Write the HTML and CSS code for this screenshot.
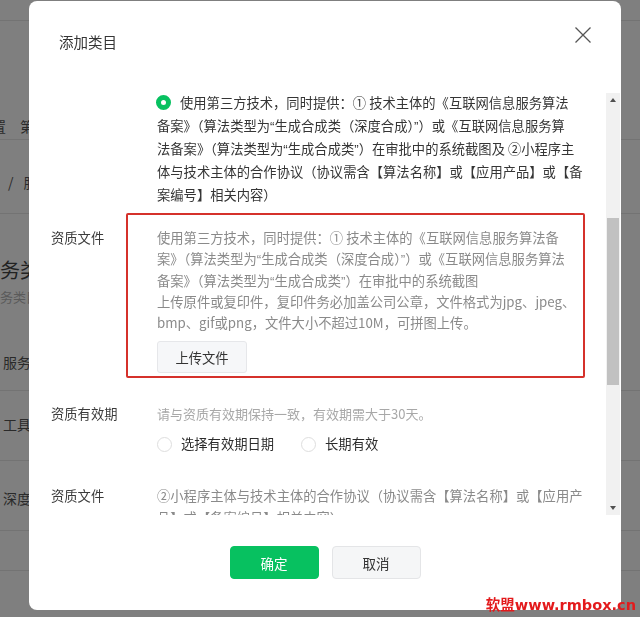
FILE: index.html
```html
<!DOCTYPE html>
<html lang="zh-CN">
<head>
    <meta charset="UTF-8">
    <title>添加类目</title>
    <link rel="stylesheet" href="styles.css">
</head>
<body>
    <div class="page">
        <div class="topbar"></div>
        <div class="tabs">
            <span class="tab tab-first">设置</span><span class="tab">第三方服务</span>
        </div>
        <div class="crumb"><span class="sep">/</span>服务类目</div>
        <div class="page-title">服务类目</div>
        <div class="page-desc">服务类目管理</div>
        <div class="row row-a">服务市场</div>
        <div class="row row-b">工具</div>
        <div class="row row-c">深度合成</div>
        <div class="row row-d"></div>
    </div>

    <div class="mask"></div>

    <div class="dialog">
        <div class="dialog-hd">
            <h3 class="dialog-title">添加类目</h3>
            <svg class="close" width="16" height="16" viewBox="0 0 16 16">
                <path d="M0.5 0.5 L15.5 15.5 M15.5 0.5 L0.5 15.5" stroke="#555" stroke-width="1.3" fill="none"/>
            </svg>
        </div>

        <div class="dialog-bd">
            <div class="scroll-content">
                <div class="form-row first-row">
                    <div class="form-label"></div>
                    <div class="form-field option-text">
                        <span class="radio radio-checked"></span>使用第三方技术，同时提供：① 技术主体的《互联网信息服务算法<br>
                        备案》（算法类型为<span class="q">“</span>生成合成类（深度合成）<span class="q">”</span>）或《互联网信息服务算<br>
                        法备案》（算法类型为<span class="q">“</span>生成合成类<span class="q">”</span>）在审批中的系统截图及 ②小程序主<br>
                        体与技术主体的合作协议（协议需含【算法名称】或【应用产品】或【备<br>
                        案编号】相关内容）
                    </div>
                </div>

                <div class="form-row">
                    <div class="form-label">资质文件</div>
                    <div class="form-field marked">
                        <div class="tips">
                            使用第三方技术，同时提供：① 技术主体的《互联网信息服务算法备<br>
                            案》（算法类型为<span class="q">“</span>生成合成类（深度合成）<span class="q">”</span>）或《互联网信息服务算法<br>
                            备案》（算法类型为<span class="q">“</span>生成合成类<span class="q">”</span>）在审批中的系统截图<br>
                            上传原件或复印件，复印件务必加盖公司公章，文件格式为jpg、jpeg、<br>
                            bmp、gif或png，文件大小不超过10M，可拼图上传。
                        </div>
                        <button class="btn-upload">上传文件</button>
                    </div>
                </div>

                <div class="form-row">
                    <div class="form-label">资质有效期</div>
                    <div class="form-field">
                        <div class="hint">请与资质有效期保持一致，有效期需大于30天。</div>
                        <div class="radio-group">
                            <label class="radio-item"><span class="radio"></span>选择有效期日期</label>
                            <label class="radio-item"><span class="radio"></span>长期有效</label>
                        </div>
                    </div>
                </div>

                <div class="form-row">
                    <div class="form-label">资质文件</div>
                    <div class="form-field">
                        <div class="tips">
                            ②小程序主体与技术主体的合作协议（协议需含【算法名称】或【应用产<br>
                            品】或【备案编号】相关内容）
                        </div>
                    </div>
                </div>
            </div>

            <div class="scrollbar">
                <span class="sb-btn"><i class="arrow-up"></i></span>
                <span class="sb-track"><span class="sb-thumb"></span></span>
                <span class="sb-btn"><i class="arrow-down"></i></span>
            </div>
        </div>

        <div class="dialog-ft">
            <button class="btn btn-primary">确定</button>
            <button class="btn btn-default">取消</button>
        </div>
    </div>

    <div class="watermark">软盟www.rmbox.cn</div>
</body>
</html>
```

FILE: styles.css
```css
html,
body {
    margin: 0;
    padding: 0;
    height: 100%;
    overflow: hidden;
}

body {
    font-family: "Noto Sans CJK SC", "Microsoft YaHei", sans-serif;
    background: #fff;
    color: #333;
}

/* page behind the mask */
.page {
    width: 640px;
    white-space: nowrap;
    overflow: hidden;
}

.topbar {
    height: 20px;
    border-bottom: 1px solid #e6e6e6;
}

.tabs {
    height: 119px;
    box-sizing: border-box;
    padding-top: 95px;
    line-height: 20px;
    font-size: 14px;
    color: #555;
    border-bottom: 1px solid #e6e6e6;
}

.tab {
    margin-right: 14px;
}

.tab-first {
    margin-left: -22px;
}

.crumb {
    height: 74px;
    box-sizing: border-box;
    padding: 32px 0 0 8px;
    line-height: 20px;
    font-size: 14px;
    color: #555;
    border-bottom: 1px solid #e6e6e6;
}

.crumb .sep {
    margin-right: 10px;
}

.page-title {
    margin-top: 42px;
    line-height: 28px;
    font-size: 20px;
    color: #444;
    text-indent: -20px;
}

.page-desc {
    margin-top: 3px;
    line-height: 20px;
    font-size: 13px;
    color: #b5b5b5;
    text-indent: -13px;
    height: 30px;
}

.row {
    box-sizing: border-box;
    padding-left: 3px;
    font-size: 14px;
    color: #555;
    border-bottom: 1px solid #e6e6e6;
}

.row-a {
    height: 74px;
    line-height: 90px;
}

.row-b {
    height: 70px;
    line-height: 66px;
}

.row-c {
    height: 70px;
    line-height: 74px;
}

.row-d {
    height: 40px;
}

.mask {
    position: fixed;
    top: 0;
    left: 0;
    right: 0;
    bottom: 0;
    background: rgba(0, 0, 0, 0.5);
}

/* dialog */
.dialog {
    position: absolute;
    top: 1px;
    left: 29px;
    width: 592px;
    height: 609px;
    background: #fff;
    border-radius: 8px;
    display: flex;
    flex-direction: column;
    overflow: hidden;
}

.dialog-hd {
    height: 90px;
    box-sizing: border-box;
    padding: 31px 30px 0 30px;
    display: flex;
    justify-content: space-between;
    align-items: flex-start;
}

.dialog-title {
    margin: 0;
    font-size: 14.5px;
    font-weight: normal;
    line-height: 20px;
    color: #353535;
}

.close {
    margin-top: -5px;
}

.dialog-bd {
    height: 424px;
    display: flex;
}

.scroll-content {
    flex: 1;
    overflow: hidden;
    padding-left: 22px;
    font-size: 13.3px;
    white-space: nowrap;
}

/* narrow quotes, kept out of the line height */
.q {
    font-family: "Liberation Sans", sans-serif;
    line-height: 0;
}

.form-row {
    display: flex;
    margin-top: 30px;
}

.form-row.first-row {
    margin-top: 0;
}

.form-row.first-row + .form-row {
    margin-top: 21px;
}

.form-label {
    width: 106px;
    flex-shrink: 0;
    line-height: 21.3px;
    color: #3b3b3b;
}

.form-field {
    flex: 1;
}

.option-text {
    line-height: 23px;
    color: #353535;
}

.tips {
    line-height: 21.3px;
    color: #8a8a8a;
}

.hint {
    line-height: 21px;
    font-size: 13px;
    color: #a8a8a8;
}

/* red annotation frame */
.marked {
    position: relative;
}

.marked::after {
    content: "";
    position: absolute;
    top: -14px;
    left: -31px;
    right: 21px;
    bottom: -5px;
    border: 2px solid #d5312b;
    border-radius: 2px;
}

.btn-upload {
    display: block;
    margin-top: 8px;
    width: 90px;
    height: 32px;
    padding: 0;
    font-family: inherit;
    font-size: 13.3px;
    color: #333;
    background: #f6f7f9;
    border: 1px solid #e6e7ea;
    border-radius: 3px;
}

.radio {
    display: inline-block;
    box-sizing: border-box;
    width: 15px;
    height: 15px;
    border: 1px solid #dedede;
    border-radius: 50%;
    background: #fff;
    margin-right: 9px;
    vertical-align: -2px;
}

.radio-checked {
    border: 5px solid #07c160;
    margin-left: -1px;
}

.radio-group {
    margin-top: 9px;
    display: flex;
    line-height: 22px;
    color: #2b2b2b;
}

.radio-item {
    display: flex;
    align-items: center;
    margin-right: 27px;
}

/* scrollbar */
.scrollbar {
    width: 14px;
    margin: 2px 1px 0 0;
    height: 422px;
    background: #f1f1f1;
    display: flex;
    flex-direction: column;
}

.sb-btn {
    height: 14px;
    display: flex;
    align-items: center;
    justify-content: center;
}

.arrow-up {
    width: 0;
    height: 0;
    border-left: 3.5px solid transparent;
    border-right: 3.5px solid transparent;
    border-bottom: 4px solid #505050;
}

.arrow-down {
    width: 0;
    height: 0;
    border-left: 3.5px solid transparent;
    border-right: 3.5px solid transparent;
    border-top: 4px solid #505050;
}

.sb-track {
    flex: 1;
    padding: 111px 1px 0 1px;
}

.sb-thumb {
    display: block;
    height: 167px;
    background: #c1c1c1;
}

/* footer */
.dialog-ft {
    flex: 1;
    padding-top: 31px;
    display: flex;
    justify-content: center;
    align-items: flex-start;
    gap: 13px;
}

.btn {
    width: 89px;
    height: 33px;
    padding: 0;
    font-family: inherit;
    font-size: 13.5px;
    border-radius: 4px;
}

.btn-primary {
    background: #07c160;
    border: 1px solid #07c160;
    color: #fff;
}

.btn-default {
    background: #f5f6f7;
    border: 1px solid #e4e5e7;
    color: #333;
}

.watermark {
    position: absolute;
    right: 4px;
    bottom: 4px;
    line-height: 16px;
    font-family: "DejaVu Sans", "Noto Sans CJK SC", sans-serif;
    font-size: 14.5px;
    font-weight: bold;
    color: #e31a1c;
}
```
